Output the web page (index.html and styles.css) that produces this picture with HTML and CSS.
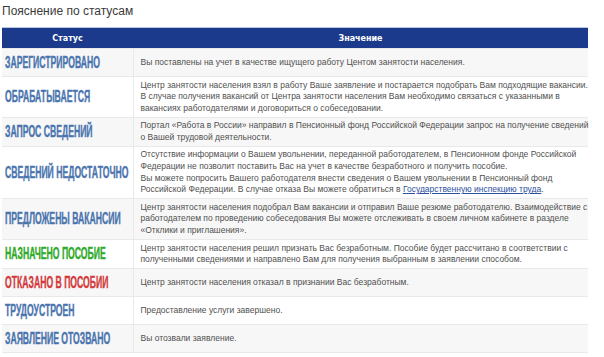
FILE: index.html
```html
<!DOCTYPE html>
<html lang="ru">
<head>
<meta charset="utf-8">
<link rel="stylesheet" href="styles.css">
</head>
<body>
<div class="page">
  <h2 class="title">Пояснение по статусам</h2>
  <table class="statuses">
    <colgroup><col class="c-status"><col class="c-value"></colgroup>
    <thead>
      <tr><th>Статус</th><th>Значение</th></tr>
    </thead>
    <tbody>
      <tr><td class="st"><span class="lbl blue">Зарегистрировано</span></td><td>Вы поставлены на учет в качестве ищущего работу Центом занятости населения.</td></tr>
      <tr><td class="st"><span class="lbl blue">Обрабатывается</span></td><td>Центр занятости населения взял в работу Ваше заявление и постарается подобрать Вам подходящие вакансии.<br>В случае получения вакансий от Центра занятости населения Вам необходимо связаться с указанными в<br>вакансиях работодателями и договориться о собеседовании.</td></tr>
      <tr><td class="st"><span class="lbl blue">Запрос сведений</span></td><td>Портал «Работа в России» направил в Пенсионный фонд Российской Федерации запрос на получение сведений<br>о Вашей трудовой деятельности.</td></tr>
      <tr><td class="st"><span class="lbl blue">Сведений недостаточно</span></td><td>Отсутствие информации о Вашем увольнении, переданной работодателем, в Пенсионном фонде Российской<br>Федерации не позволит поставить Вас на учет в качестве безработного и получить пособие.<br>Вы можете попросить Вашего работодателя внести сведения о Вашем увольнении в Пенсионный фонд<br>Российской Федерации. В случае отказа Вы можете обратиться в <a href="#">Государственную инспекцию труда</a>.</td></tr>
      <tr><td class="st"><span class="lbl blue">Предложены вакансии</span></td><td>Центр занятости населения подобрал Вам вакансии и отправил Ваше резюме работодателю. Взаимодействие с<br>работодателем по проведению собеседования Вы можете отслеживать в своем личном кабинете в разделе<br>«Отклики и приглашения».</td></tr>
      <tr><td class="st"><span class="lbl green">Назначено пособие</span></td><td>Центр занятости населения решил признать Вас безработным. Пособие будет рассчитано в соответствии с<br>полученными сведениями и направлено Вам для получения выбранным в заявлении способом.</td></tr>
      <tr><td class="st"><span class="lbl red">Отказано в пособии</span></td><td>Центр занятости населения отказал в признании Вас безработным.</td></tr>
      <tr><td class="st"><span class="lbl blue">Трудоустроен</span></td><td>Предоставление услуги завершено.</td></tr>
      <tr><td class="st"><span class="lbl blue">Заявление отозвано</span></td><td>Вы отозвали заявление.</td></tr>
    </tbody>
  </table>
</div>
</body>
</html>
```
FILE: styles.css
```css
html, body {
  margin: 0;
  padding: 0;
  background: #fff;
}
.page {
  padding: 3px 0 0 2px;
  font-family: "Liberation Sans", Arial, sans-serif;
}
.title {
  margin: 0 0 8px 0;
  font-size: 12px;
  font-weight: normal;
  color: #3a3a3a;
  line-height: 16px;
}
.statuses {
  width: 586px;
  border-collapse: collapse;
  table-layout: fixed;
  border-top: 1px solid #b9c6e0;
}
.c-status { width: 131px; }
.statuses th {
  background: #1b3a8c;
  color: #fff;
  font-family: "DejaVu Sans", sans-serif;
  font-weight: bold;
  font-size: 8px;
  height: 20px;
  padding: 0;
  text-align: center;
}
.statuses td {
  border: 1px solid #e9e9e9;
  border-left: none;
  border-right: none;
  padding: 2.5px 2px 2.5px 7px;
  font-size: 8.5px;
  line-height: 11.6px;
  color: #505050;
  vertical-align: middle;
  white-space: nowrap;
}
.statuses td + td {
  border-left: 1px solid #e9e9e9;
}
.statuses tbody tr:nth-child(odd) td {
  background: #f7f7f7;
}
.statuses td.st {
  padding: 0 0 0 3px;
  height: 27px;
  overflow: visible;
}
.lbl {
  display: inline-block;
  font-weight: bold;
  font-size: 16px;
  line-height: 18px;
  text-transform: uppercase;
  transform: scaleX(0.54);
  transform-origin: left center;
  -webkit-text-stroke: 0.4px currentColor;
}
.blue { color: #4a74ae; }
.green { color: #2faa2a; }
.red { color: #d33a3d; }
.statuses a {
  color: #2c4fa0;
  text-decoration: underline;
}
```
